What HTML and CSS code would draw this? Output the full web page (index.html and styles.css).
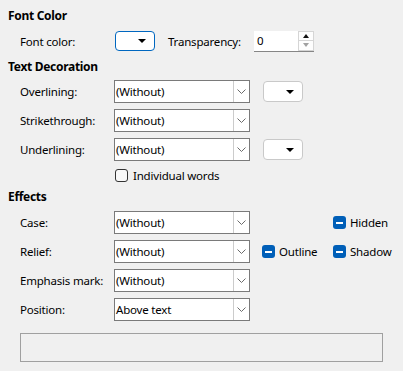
FILE: index.html
```html
<!DOCTYPE html>
<html>
<head>
<meta charset="utf-8">
<link rel="stylesheet" href="styles.css">
</head>
<body>
<div class="page">
  <div class="header first">Font Color</div>
  <div class="row r-font">
    <span class="label short">Font color:</span>
    <span class="colorbtn focused"><span class="tri"></span></span>
    <span class="label trans">Transparency:</span>
    <span class="spin">
      <span class="spin-field">0</span>
      <span class="spin-btns">
        <span class="spin-up"><span class="up"></span></span>
        <span class="spin-down"><span class="down"></span></span>
      </span>
    </span>
  </div>

  <div class="header">Text Decoration</div>
  <div class="row r-first">
    <span class="label">Overlining:</span>
    <span class="combo"><span class="combo-text">(Without)</span><span class="combo-btn"><svg width="9" height="5" viewBox="0 0 9 5"><path d="M0.5 0.5 L4.5 4.5 L8.5 0.5" fill="none" stroke="#6b6b6b" stroke-width="1"/></svg></span></span>
    <span class="colorbtn side"><span class="tri"></span></span>
  </div>
  <div class="row">
    <span class="label">Strikethrough:</span>
    <span class="combo"><span class="combo-text">(Without)</span><span class="combo-btn"><svg width="9" height="5" viewBox="0 0 9 5"><path d="M0.5 0.5 L4.5 4.5 L8.5 0.5" fill="none" stroke="#6b6b6b" stroke-width="1"/></svg></span></span>
  </div>
  <div class="row">
    <span class="label">Underlining:</span>
    <span class="combo"><span class="combo-text">(Without)</span><span class="combo-btn"><svg width="9" height="5" viewBox="0 0 9 5"><path d="M0.5 0.5 L4.5 4.5 L8.5 0.5" fill="none" stroke="#6b6b6b" stroke-width="1"/></svg></span></span>
    <span class="colorbtn side"><span class="tri"></span></span>
  </div>
  <div class="checkrow">
    <span class="box-empty"></span>
    <span>Individual words</span>
  </div>

  <div class="header effects">Effects</div>
  <div class="row r-case">
    <span class="label">Case:</span>
    <span class="combo"><span class="combo-text">(Without)</span><span class="combo-btn"><svg width="9" height="5" viewBox="0 0 9 5"><path d="M0.5 0.5 L4.5 4.5 L8.5 0.5" fill="none" stroke="#6b6b6b" stroke-width="1"/></svg></span></span>
    <span class="spacer"></span>
    <span class="tick"><span class="box-on"></span>Hidden</span>
  </div>
  <div class="row">
    <span class="label">Relief:</span>
    <span class="combo"><span class="combo-text">(Without)</span><span class="combo-btn"><svg width="9" height="5" viewBox="0 0 9 5"><path d="M0.5 0.5 L4.5 4.5 L8.5 0.5" fill="none" stroke="#6b6b6b" stroke-width="1"/></svg></span></span>
    <span class="tick outline"><span class="box-on"></span>Outline</span>
    <span class="tick"><span class="box-on"></span>Shadow</span>
  </div>
  <div class="row">
    <span class="label">Emphasis mark:</span>
    <span class="combo"><span class="combo-text">(Without)</span><span class="combo-btn"><svg width="9" height="5" viewBox="0 0 9 5"><path d="M0.5 0.5 L4.5 4.5 L8.5 0.5" fill="none" stroke="#6b6b6b" stroke-width="1"/></svg></span></span>
  </div>
  <div class="row">
    <span class="label">Position:</span>
    <span class="combo"><span class="combo-text">Above text</span><span class="combo-btn"><svg width="9" height="5" viewBox="0 0 9 5"><path d="M0.5 0.5 L4.5 4.5 L8.5 0.5" fill="none" stroke="#6b6b6b" stroke-width="1"/></svg></span></span>
  </div>
  <div class="preview"></div>
</div>
</body>
</html>
```

FILE: styles.css
```css
html, body {
  margin: 0;
  padding: 0;
  background: #f0f0f0;
}
body {
  font-family: "Noto Sans", "Open Sans", sans-serif;
  font-size: 11.5px;
  letter-spacing: -0.2px;
  color: #000;
}
.page {
  width: 403px;
  height: 371px;
  padding: 0 0 0 8px;
  box-sizing: border-box;
  overflow: hidden;
}
.header {
  font-weight: bold;
  font-size: 12px;
  letter-spacing: -0.3px;
  height: 16px;
  line-height: 16px;
  margin-top: 8px;
}
.header.first { margin-top: 8px; }
.header.effects { margin-top: 7px; }

.row {
  display: flex;
  align-items: center;
  height: 23px;
  margin-top: 6px;
  padding-left: 12px;
}
.r-font { height: 20px; margin-top: 7px; }
.r-first { margin-top: 5px; }
.r-case { margin-top: 6px; }

.label {
  width: 94px;
  flex: none;
  white-space: nowrap;
}
.label.short { width: 95px; }
.label.trans { width: 86px; margin-left: 13px; }

.colorbtn {
  box-sizing: border-box;
  width: 40px;
  height: 20px;
  background: #fff;
  border: 1px solid #c9c9c9;
  border-radius: 4px;
  position: relative;
  flex: none;
}
.colorbtn.focused { border-color: #0067c0; }
.colorbtn.side { height: 21px; margin-left: 13px; }
.tri {
  position: absolute;
  right: 8px;
  top: 50%;
  margin-top: -2px;
  width: 0;
  height: 0;
  border-left: 4px solid transparent;
  border-right: 4px solid transparent;
  border-top: 4px solid #000;
}

.spin {
  display: flex;
  width: 60px;
  height: 21px;
  box-sizing: border-box;
  background: #fff;
  border-bottom: 1px solid #868686;
  flex: none;
}
.spin-field {
  flex: 1;
  padding-left: 3px;
  line-height: 20px;
}
.spin-btns {
  display: flex;
  flex-direction: column;
  width: 16px;
  background: #f0f0f0;
}
.spin-up, .spin-down {
  flex: 1;
  position: relative;
  background: #fdfdfd;
  border: 1px solid #d5d5d5;
}
.spin-up { border-bottom: none; }
.up, .down {
  position: absolute;
  left: 50%;
  top: 50%;
  margin-left: -3px;
  width: 0;
  height: 0;
  border-left: 3px solid transparent;
  border-right: 3px solid transparent;
}
.up { border-bottom: 4px solid #111; margin-top: -2px; }
.down { border-top: 4px solid #a0a0a0; margin-top: -2px; }

.combo {
  box-sizing: border-box;
  width: 136px;
  height: 23px;
  background: #fff;
  border: 1px solid #7a7a7a;
  display: flex;
  flex: none;
}
.combo-text {
  flex: 1;
  padding-left: 1px;
  line-height: 21px;
  white-space: nowrap;
}
.combo-btn {
  width: 16px;
  box-sizing: border-box;
  border-left: 1px solid #cccccc;
  display: flex;
  align-items: center;
  justify-content: center;
}

.checkrow {
  display: flex;
  align-items: center;
  height: 14px;
  margin-top: 7px;
  padding-left: 107px;
}
.box-empty {
  box-sizing: border-box;
  width: 13px;
  height: 13px;
  border: 1px solid #333;
  border-radius: 3px;
  margin-right: 5px;
  background: #f8f8f8;
}

.spacer { width: 83px; flex: none; }
.tick {
  display: flex;
  align-items: center;
  white-space: nowrap;
}
.tick.outline { margin-left: 12px; width: 71px; flex: none; }
.box-on {
  width: 13px;
  height: 13px;
  border-radius: 3px;
  background: #005fb8;
  position: relative;
  margin-right: 4px;
  flex: none;
}
.box-on::after {
  content: "";
  position: absolute;
  left: 3px;
  top: 6px;
  width: 7px;
  height: 1.5px;
  background: #fff;
}

.preview {
  box-sizing: border-box;
  margin: 12px 0 0 12px;
  width: 363px;
  height: 29px;
  border: 1px solid #a0a0a0;
}
```
